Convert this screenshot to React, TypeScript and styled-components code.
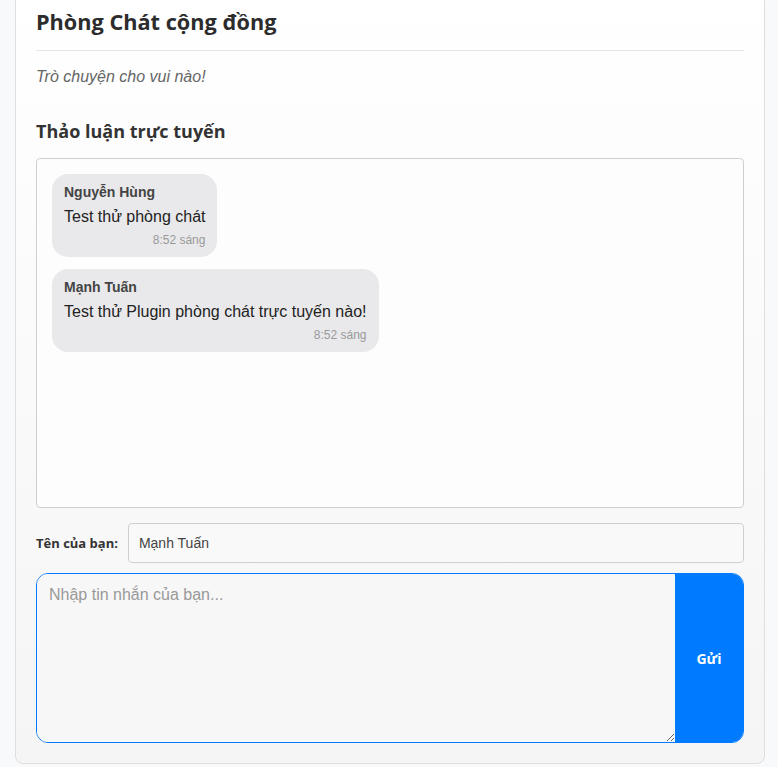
import React, {useState} from 'react';
import styled, {createGlobalStyle} from 'styled-components';

type Message = {
    id: number;
    author: string;
    text: string;
    time: string;
};

const messages: Message[] = [
    {id: 1, author: 'Nguyễn Hùng', text: 'Test thử phòng chát', time: '8:52 sáng'},
    {id: 2, author: 'Mạnh Tuấn', text: 'Test thử Plugin phòng chát trực tuyến nào!', time: '8:52 sáng'},
];

const App = () => {
    const [name, setName] = useState('Mạnh Tuấn');
    const [draft, setDraft] = useState('');

    return (
        <>
            <GlobalStyle/>
            <Card>
                <Title>{'Phòng Chát cộng đồng'}</Title>
                <Subtitle>{'Trò chuyện cho vui nào!'}</Subtitle>
                <SectionTitle>{'Thảo luận trực tuyến'}</SectionTitle>
                <ChatBox>
                    {messages.map((m) => (
                        <Bubble key={m.id}>
                            <Author>{m.author}</Author>
                            <Text>{m.text}</Text>
                            <Time>{m.time}</Time>
                        </Bubble>
                    ))}
                </ChatBox>
                <NameRow>
                    <NameLabel htmlFor='chat-name'>{'Tên của bạn:'}</NameLabel>
                    <NameInput
                        id='chat-name'
                        value={name}
                        onChange={(e) => setName(e.target.value)}
                    />
                </NameRow>
                <Composer>
                    <MessageInput
                        placeholder='Nhập tin nhắn của bạn...'
                        value={draft}
                        onChange={(e) => setDraft(e.target.value)}
                    />
                    <SendButton type='button'>{'Gửi'}</SendButton>
                </Composer>
            </Card>
        </>
    );
};

const GlobalStyle = createGlobalStyle`
    html, body {
        margin: 0;
        padding: 0;
        background: #f8f9fa;
    }

    body {
        font-family: "Liberation Sans", Arial, sans-serif;
        color: #333;
    }
`;

// top edge sits just above the viewport, as in the cropped screenshot
const Card = styled.div`
    display: flex;
    flex-direction: column;
    width: 750px;
    box-sizing: border-box;
    margin: -14px 0 0 15px;
    padding: 20px;
    background: linear-gradient(#ffffff, #f5f5f5);
    border: 1px solid #dedede;
    border-radius: 8px;
`;

const Title = styled.h2`
    margin: 0;
    padding-bottom: 13px;
    border-bottom: 1px solid #e6e6e6;
    font-family: "Open Sans", "Noto Sans", sans-serif;
    font-size: 21.7px;
    font-weight: 700;
    line-height: 30px;
    color: #2c2c2c;
`;

const Subtitle = styled.p`
    margin: 15px 0 0 0;
    font-size: 16px;
    font-style: italic;
    line-height: 22px;
    color: #666;
`;

const SectionTitle = styled.h3`
    margin: 30px 0 0 0;
    font-family: "Open Sans", "Noto Sans", sans-serif;
    font-size: 18px;
    font-weight: 700;
    line-height: 26px;
    color: #333;
`;

const ChatBox = styled.div`
    display: flex;
    flex-direction: column;
    align-items: flex-start;
    gap: 12px;
    flex-shrink: 0;
    height: 350px;
    box-sizing: border-box;
    margin-top: 14px;
    padding: 15px;
    background: #fdfdfd;
    border: 1px solid #cfcfcf;
    border-radius: 4px;
    overflow-y: auto;
`;

const Bubble = styled.div`
    display: flex;
    flex-direction: column;
    padding: 10px 12px 9px 12px;
    background: #e9e9eb;
    border-radius: 16px;
`;

const Author = styled.div`
    font-size: 14px;
    font-weight: 700;
    line-height: 16px;
    color: #444;
`;

const Text = styled.div`
    margin-top: 7px;
    font-size: 16px;
    line-height: 19px;
    color: #222;
`;

const Time = styled.div`
    margin-top: 6px;
    align-self: flex-end;
    font-size: 12px;
    line-height: 16px;
    color: #999;
`;

const NameRow = styled.div`
    display: flex;
    align-items: center;
    gap: 10px;
    margin-top: 15px;
`;

const NameLabel = styled.label`
    font-family: "Open Sans", "Noto Sans", sans-serif;
    font-size: 13px;
    font-weight: 700;
    color: #333;
`;

const NameInput = styled.input`
    flex: 1;
    height: 40px;
    box-sizing: border-box;
    padding: 0 10px;
    background: #f9f9f9;
    border: 1px solid #cfcfcf;
    border-radius: 4px;
    font-family: "Liberation Sans", Arial, sans-serif;
    font-size: 14px;
    color: #444;
    outline: none;
`;

const Composer = styled.div`
    display: flex;
    flex-shrink: 0;
    height: 170px;
    box-sizing: border-box;
    margin-top: 10px;
    border: 1px solid #007bff;
    border-radius: 12px;
    overflow: hidden;
`;

const MessageInput = styled.textarea`
    flex: 1;
    box-sizing: border-box;
    padding: 12px;
    background: #f7f7f7;
    border: none;
    font-family: "Liberation Sans", Arial, sans-serif;
    font-size: 16px;
    color: #333;
    outline: none;
    resize: vertical;

    &::placeholder {
        color: #999;
    }
`;

const SendButton = styled.button`
    width: 68px;
    background: #007bff;
    border: none;
    color: #fff;
    font-family: "Open Sans", "Noto Sans", sans-serif;
    font-size: 14px;
    font-weight: 700;
    cursor: pointer;
`;

export default App;
